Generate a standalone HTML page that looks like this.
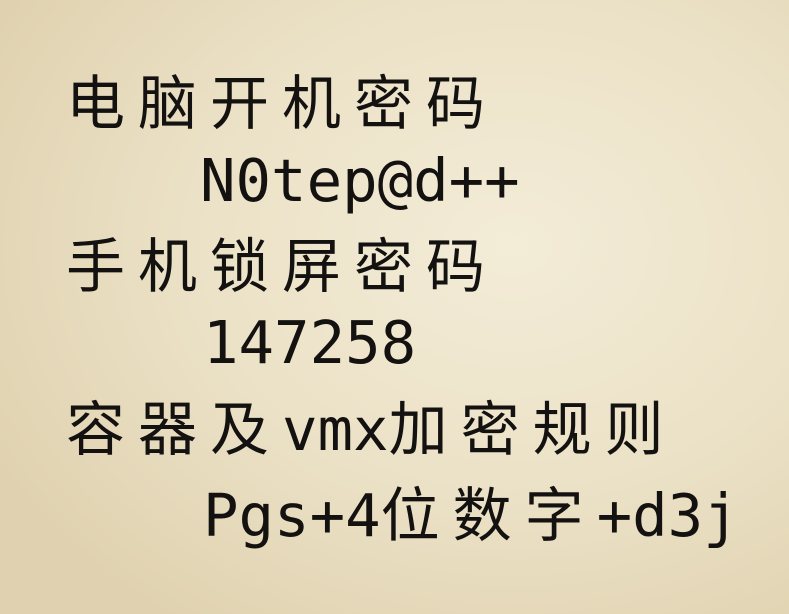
<!DOCTYPE html>
<html><head><meta charset="utf-8"><style>
html,body{margin:0;padding:0}
body{width:789px;height:614px;overflow:hidden;position:relative;
background:
radial-gradient(ellipse 75% 75% at 65% 40%, #f3ecd7 0%, #ebe1c6 55%, #e0d2b0 100%);
font-family:"DejaVu Sans Mono","Liberation Mono","Noto Sans CJK SC",monospace;color:#141210}
.l{position:absolute;font-size:59px;line-height:70px;white-space:nowrap}
.c{font-family:"Noto Sans CJK SC","WenQuanYi Zen Hei",sans-serif;letter-spacing:13px;font-weight:400}
</style></head><body>
<div class="l c" style="left:66px;top:64px">电脑开机密码</div>
<div class="l" style="left:200px;top:146px">N0tep@d++</div>
<div class="l c" style="left:66px;top:227px">手机锁屏密码</div>
<div class="l" style="left:203px;top:308px">147258</div>
<div class="l" style="left:66px;top:390px"><span class="c">容器及</span>vmx<span class="c">加密规则</span></div>
<div class="l" style="left:203px;top:476px">Pgs+4<span class="c">位数字</span>+d3j</div>
</body></html>
